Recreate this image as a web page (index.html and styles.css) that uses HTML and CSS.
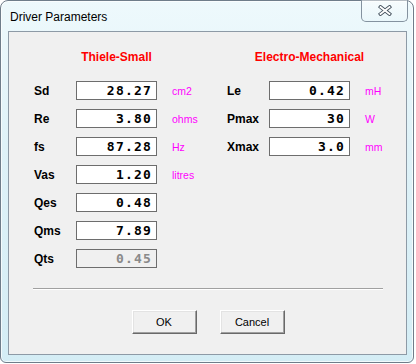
FILE: index.html
```html
<!DOCTYPE html>
<html lang="en">
<head>
    <meta charset="UTF-8">
    <title>Driver Parameters</title>
    <link rel="stylesheet" href="styles.css">
</head>
<body>

<div class="window">
    <div class="titlebar">
        <span class="title">Driver Parameters</span>
        <div class="close">
            <svg width="14" height="11" viewBox="0 0 14 11">
                <path d="M2.5 2 L11.5 9 M11.5 2 L2.5 9" stroke="#45525e" stroke-width="3.6" stroke-linecap="square" fill="none"/>
                <path d="M2.5 2 L11.5 9 M11.5 2 L2.5 9" stroke="#ffffff" stroke-width="1.8" stroke-linecap="square" fill="none"/>
            </svg>
        </div>
    </div>

    <div class="client">
        <div class="groups">
            <!-- left group -->
            <section class="group">
                <div class="heading"><span>Thiele-Small</span></div>
                <div class="row"><span class="label">Sd</span><span class="field">28.27</span><span class="unit">cm2</span></div>
                <div class="row"><span class="label">Re</span><span class="field">3.80</span><span class="unit">ohms</span></div>
                <div class="row"><span class="label">fs</span><span class="field">87.28</span><span class="unit">Hz</span></div>
                <div class="row"><span class="label">Vas</span><span class="field">1.20</span><span class="unit">litres</span></div>
                <div class="row"><span class="label">Qes</span><span class="field">0.48</span></div>
                <div class="row"><span class="label">Qms</span><span class="field">7.89</span></div>
                <div class="row"><span class="label">Qts</span><span class="field disabled">0.45</span></div>
            </section>

            <!-- right group -->
            <section class="group">
                <div class="heading"><span>Electro-Mechanical</span></div>
                <div class="row"><span class="label">Le</span><span class="field">0.42</span><span class="unit">mH</span></div>
                <div class="row"><span class="label">Pmax</span><span class="field">30</span><span class="unit">W</span></div>
                <div class="row"><span class="label">Xmax</span><span class="field">3.0</span><span class="unit">mm</span></div>
            </section>
        </div>

        <hr class="sep">

        <div class="buttons">
            <button type="button">OK</button>
            <button type="button">Cancel</button>
        </div>
    </div>
</div>

</body>
</html>
```

FILE: styles.css
```css
body {
    margin: 0;
    background-color: #ffffff;
    font-family: "Liberation Sans", Arial, sans-serif;
    color: #000;
}
.window {
    width: 412px;
    height: 361px;
    border: 1px solid #6f7d8a;
    border-radius: 8px 8px 6px 6px;
    background: linear-gradient(to bottom, #eef9fc 0%, #dff2f8 40%, #d4edf5 100%);
    box-shadow: inset 0 0 0 1px rgba(255, 255, 255, 0.7);
}
.titlebar {
    display: flex;
    justify-content: space-between;
    align-items: flex-start;
    height: 30px;
}
.title {
    margin: 9px 0 0 9px;
    font-size: 12px;
    line-height: 14px;
}
.close {
    display: flex;
    align-items: center;
    justify-content: center;
    width: 45px;
    height: 21px;
    margin-top: -1px;
    margin-right: 5px;
    border: 1px solid #84929f;
    border-top: none;
    border-radius: 0 0 5px 5px;
    background: linear-gradient(to bottom, rgba(255, 255, 255, 0.5), rgba(230, 245, 250, 0.3));
}
.client {
    box-sizing: border-box;
    height: 324px;
    margin: 0 6px 0 7px;
    padding: 18px 23px 0 24px;
    border: 1px solid #8d9aa6;
    background-color: #f0f0f0;
}
.groups {
    display: grid;
    grid-template-columns: 193px auto;
    padding-left: 1px;
}
.heading {
    display: flex;
    justify-content: center;
    width: 81px;
    height: 14px;
    margin: 0 0 17px 42px;
    white-space: nowrap;
    color: #ff0000;
    font-size: 12px;
    font-weight: bold;
    line-height: 14px;
}
.row {
    display: flex;
    align-items: center;
    height: 19px;
    margin-bottom: 9px;
}
.row:last-child {
    margin-bottom: 0;
}
.label {
    width: 42px;
    font-size: 12px;
    font-weight: bold;
}
.field {
    box-sizing: border-box;
    width: 81px;
    height: 19px;
    padding-right: 4px;
    border: 1px solid #6d6d6d;
    background-color: #ffffff;
    text-align: right;
    font-family: "DejaVu Sans Mono", monospace;
    font-size: 13px;
    font-weight: bold;
    line-height: 17px;
    letter-spacing: 1.2px;
}
.field.disabled {
    background-color: #f0f0f0;
    color: #8a8a8a;
}
.unit {
    margin-left: 15px;
    color: #ff00ff;
    font-size: 10.5px;
}
.sep {
    height: 0;
    margin: 20px 0;
    border: 0;
    border-top: 1px solid #a0a0a0;
    border-bottom: 1px solid #ffffff;
}
.buttons {
    display: flex;
    justify-content: center;
    gap: 23px;
}
.buttons button {
    width: 65px;
    height: 24px;
    padding: 0;
    border: 1px solid;
    border-color: #ffffff #696969 #696969 #ffffff;
    background-color: #f0f0f0;
    box-shadow: inset -1px -1px #a0a0a0, inset 1px 1px #e3e3e3;
    font-family: "Liberation Sans", Arial, sans-serif;
    font-size: 11px;
    color: #000;
}
```
